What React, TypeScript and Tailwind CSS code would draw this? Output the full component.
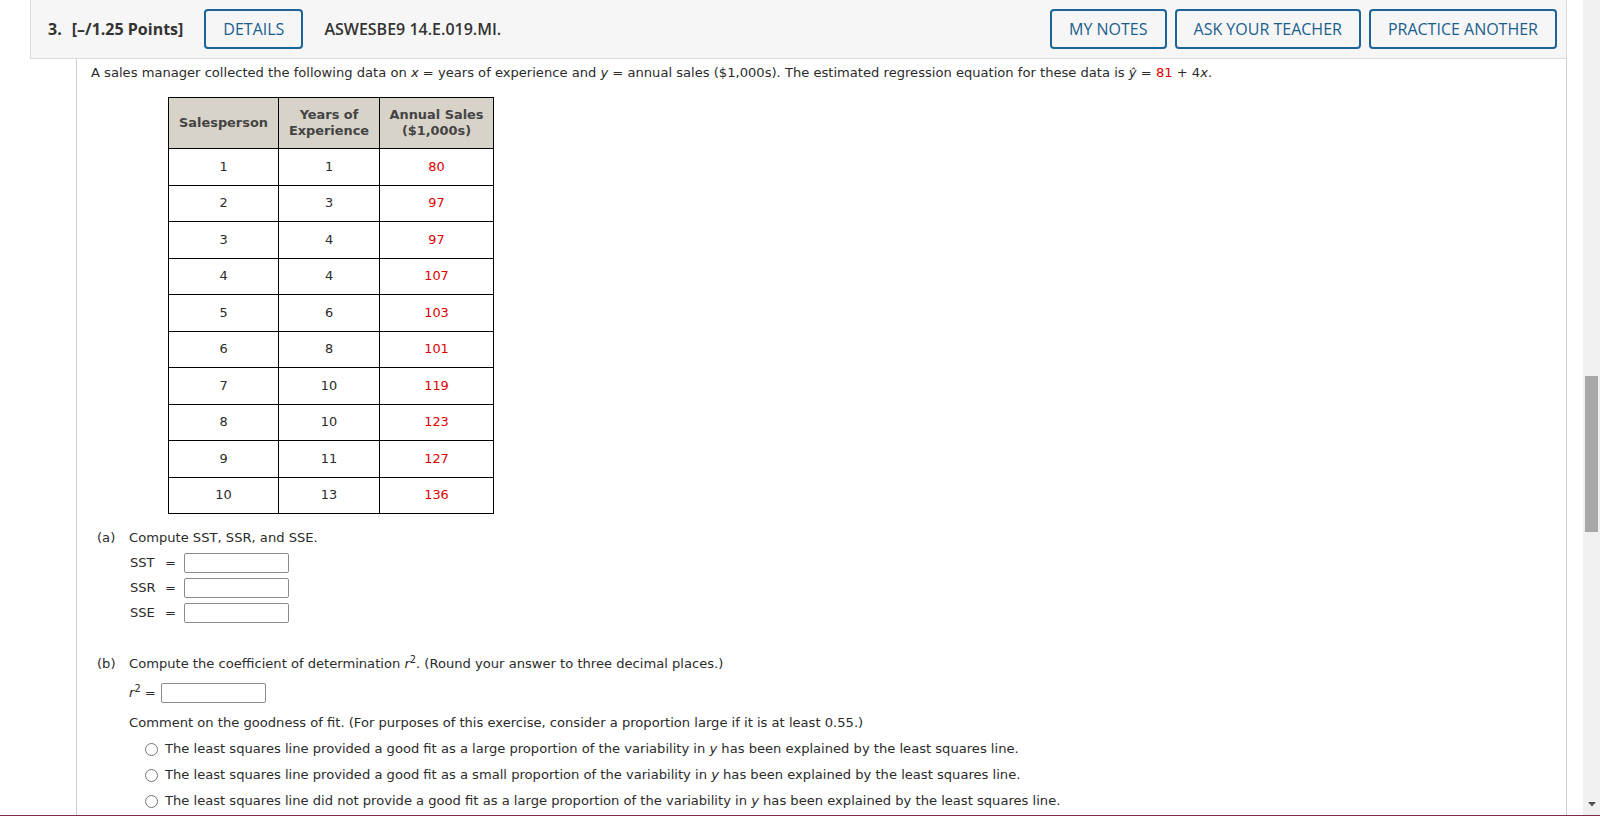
import React from 'react'

const rows: [number, number, number][] = [
	[1, 1, 80],
	[2, 3, 97],
	[3, 4, 97],
	[4, 4, 107],
	[5, 6, 103],
	[6, 8, 101],
	[7, 10, 119],
	[8, 10, 123],
	[9, 11, 127],
	[10, 13, 136],
]

const choices = [
	['The least squares line provided a good fit as a large proportion of the variability in ', ' has been explained by the least squares line.'],
	['The least squares line provided a good fit as a small proportion of the variability in ', ' has been explained by the least squares line.'],
	['The least squares line did not provide a good fit as a large proportion of the variability in ', ' has been explained by the least squares line.'],
]

function HeaderButton({ label }: { label: string }) {
	return (
		<button className="h-[40px] px-[17px] border-2 border-[#1a6496] rounded-[4px] text-[#1a5e8e] text-[16px] bg-[#f6f6f6] whitespace-nowrap">
			{label}
		</button>
	)
}

function AnswerBox({ width = 'w-[105px]' }: { width?: string }) {
	return <div className={`${width} h-[20px] border border-[#8c8c8c] rounded-[2px] bg-white`} />
}

export default function App() {
	return (
		<div className="relative h-[816px] overflow-hidden bg-white flex">
			{/* main page */}
			<div className="flex-1 pl-[30px] pr-[16px]">
				{/* question header */}
				<div
					className="h-[59px] bg-[#f6f6f6] border-l border-r border-b border-[#dcdcdc] flex items-center pl-[17px] pr-[9px] text-[#333]"
					style={{ fontFamily: '"Open Sans", "Noto Sans", sans-serif' }}
				>
					<span className="text-[16px] font-bold">3.</span>
					<span className="text-[16px] font-bold ml-[10px]">[–/1.25 Points]</span>
					<div className="ml-[21px]">
						<HeaderButton label="DETAILS" />
					</div>
					<span className="ml-[21px] text-[16px] font-semibold">ASWESBE9 14.E.019.MI.</span>
					<div className="ml-auto flex gap-[8px]">
						<HeaderButton label="MY NOTES" />
						<HeaderButton label="ASK YOUR TEACHER" />
						<HeaderButton label="PRACTICE ANOTHER" />
					</div>
				</div>

				{/* question body */}
				<div
					className="ml-[46px] h-[760px] border-l border-r border-[#cfcfcf] pl-[14px] pt-[6px] text-[13.1px] leading-[16px] text-[#2b2b2b]"
					style={{ fontFamily: '"DejaVu Sans", Verdana, sans-serif' }}
				>
					<p>
						A sales manager collected the following data on <i>x</i> = years of experience and <i>y</i> = annual
						sales ($1,000s). The estimated regression equation for these data is <i>ŷ</i> ={' '}
						<span className="text-[#e00000]">81</span> + 4<i>x</i>.
					</p>

					<table className="mt-[16px] ml-[77px] border-collapse text-center text-[12.9px]">
						<thead>
							<tr className="h-[51px] bg-[#d8d3c9] text-[#444]">
								<th className="w-[110px] border border-black font-bold">Salesperson</th>
								<th className="w-[101px] border border-black font-bold leading-[16px]">
									Years of
									<br />
									Experience
								</th>
								<th className="w-[114px] border border-black font-bold leading-[16px]">
									Annual Sales
									<br />
									($1,000s)
								</th>
							</tr>
						</thead>
						<tbody>
							{rows.map(([s, y, a]) => (
								<tr key={s} className="h-[36.5px]">
									<td className="border border-black">{s}</td>
									<td className="border border-black">{y}</td>
									<td className="border border-black text-[#e00000]">{a}</td>
								</tr>
							))}
						</tbody>
					</table>

					{/* part a */}
					<div className="mt-[16px] ml-[6px]">
						<div className="flex">
							<span className="w-[32px]">(a)</span>
							<span>Compute SST, SSR, and SSE.</span>
						</div>
						<div className="ml-[33px] mt-[7px] flex flex-col gap-[5px]">
							{['SST', 'SSR', 'SSE'].map((l) => (
								<div key={l} className="flex items-center">
									<span className="w-[35px]">{l}</span>
									<span>=</span>
									<span className="ml-[8px]">
										<AnswerBox />
									</span>
								</div>
							))}
						</div>
					</div>

					{/* part b */}
					<div className="mt-[33px] ml-[6px]">
						<div className="flex">
							<span className="w-[32px]">(b)</span>
							<span>
								Compute the coefficient of determination <i>r</i>
								<sup>2</sup>. (Round your answer to three decimal places.)
							</span>
						</div>
						<div className="ml-[32px] mt-[11px] flex items-center">
							<span>
								<i>r</i>
								<sup>2</sup>
							</span>
							<span className="ml-[4px]">=</span>
							<span className="ml-[5px]">
								<AnswerBox />
							</span>
						</div>
						<p className="ml-[32px] mt-[12px]">
							Comment on the goodness of fit. (For purposes of this exercise, consider a proportion large if it is
							at least 0.55.)
						</p>
						<div className="ml-[48px] mt-[5px] flex flex-col">
							{choices.map(([a, b], i) => (
								<label key={i} className="h-[26px] flex items-center">
									<span className="w-[13px] h-[13px] rounded-full border border-[#767676] bg-white" />
									<span className="ml-[7px]">
										{a}
										<i>y</i>
										{b}
									</span>
								</label>
							))}
						</div>
					</div>
				</div>
			</div>

			{/* fake scrollbar */}
			<div className="w-[17px] bg-[#f0f0f0] flex flex-col">
				<div className="h-[376px]" />
				<div className="h-[156px] mx-[2px] bg-[#a8a8a8]" />
				<div className="flex-1" />
				<div className="h-[14px] flex justify-center">
					<svg width="8" height="5" viewBox="0 0 8 5">
						<path d="M0 0 H8 L4 4.5 Z" fill="#505050" />
					</svg>
				</div>
			</div>

			{/* footer bar edge */}
			<div className="fixed bottom-0 left-0 right-0 h-px bg-[#7d2b48]" />
		</div>
	)
}
